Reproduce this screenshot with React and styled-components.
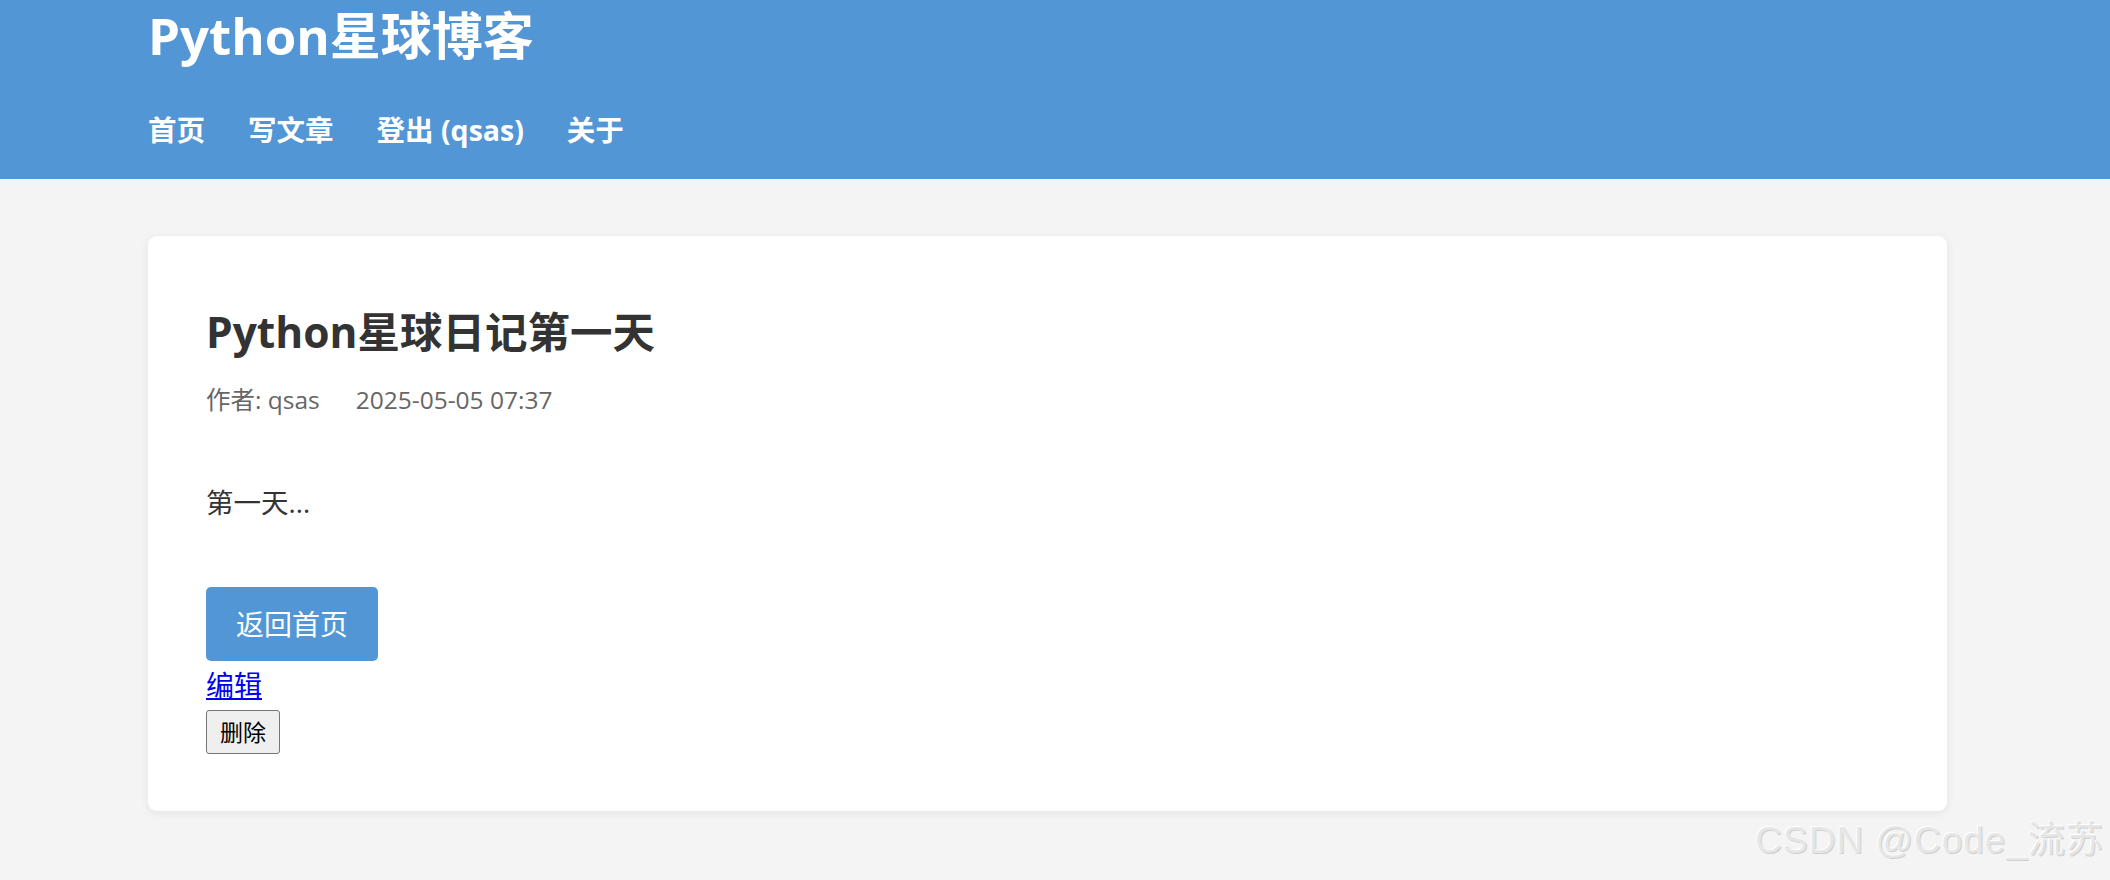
import React from "react";
import styled, { createGlobalStyle } from "styled-components";

const GlobalStyle = createGlobalStyle`
  html, body {
    margin: 0;
    padding: 0;
    min-height: 100%;
    background-color: #f4f4f4;
    font-family: "Open Sans", "Noto Sans CJK SC", sans-serif;
  }
`;

const Page = styled.div`
  position: relative;
  min-height: 880px;
  background-color: #f4f4f4;
`;

const Header = styled.header`
  background-color: #5396d5;
  color: white;
  padding: 5px 0 29px;
`;

const Container = styled.div`
  margin: 0 163px 0 148px;
`;

const SiteTitle = styled.h1`
  margin: 0;
  font-size: 51px;
  line-height: 60px;
  font-weight: 700;
`;

const Nav = styled.nav`
  display: flex;
  gap: 43px;
  margin-top: 45px;
`;

const NavLink = styled.a`
  color: white;
  text-decoration: none;
  font-size: 28.5px;
  line-height: 40px;
  font-weight: 700;
`;

const Main = styled.main`
  padding-top: 57px;
`;

const Card = styled.article`
  background: white;
  border-radius: 9px;
  box-shadow: 0 2px 10px rgba(0, 0, 0, 0.07);
  padding: 66px 58px 57px;
`;

const PostTitle = styled.h2`
  margin: 0;
  color: #333;
  font-size: 42.5px;
  line-height: 60px;
  font-weight: 700;
`;

const Meta = styled.div`
  display: flex;
  gap: 36px;
  margin-top: 21px;
  color: #666;
  font-size: 24.5px;
  line-height: 34px;
`;

const Body = styled.p`
  margin: 66px 0 0;
  color: #333;
  font-size: 27.5px;
  line-height: 40px;
`;

const BackButton = styled.a`
  display: inline-block;
  margin-top: 64px;
  height: 74px;
  padding: 0 30px;
  background-color: #5396d5;
  color: white;
  border-radius: 5px;
  font-size: 28px;
  line-height: 74px;
  text-decoration: none;
`;

const EditLink = styled.a`
  display: block;
  width: max-content;
  margin-top: 6px;
  color: #0000ee;
  text-decoration: underline;
  font-size: 28px;
  line-height: 36px;
`;

const DeleteButton = styled.button`
  display: block;
  margin-top: 7px;
  height: 44px;
  padding: 0 13px;
  background-color: #efefef;
  border: 1px solid #767676;
  border-radius: 3px;
  color: black;
  font-family: "Open Sans", "Noto Sans CJK SC", sans-serif;
  font-size: 23px;
  line-height: 40px;
`;

const Watermark = styled.div`
  position: absolute;
  right: 6px;
  bottom: 19px;
  font-family: "Liberation Sans", "Noto Sans CJK SC", sans-serif;
  font-size: 37px;
  line-height: 40px;
  letter-spacing: 1px;
  color: #e6e6e6;
  text-shadow: -1px -1px 0 #ffffff, 1px 1px 0 #cfcfcf;
  pointer-events: none;
`;

const App = () => {
  return (
    <Page>
      <GlobalStyle />
      <Header>
        <Container>
          <SiteTitle>Python星球博客</SiteTitle>
          <Nav>
            <NavLink href="#">首页</NavLink>
            <NavLink href="#">写文章</NavLink>
            <NavLink href="#">登出 (qsas)</NavLink>
            <NavLink href="#">关于</NavLink>
          </Nav>
        </Container>
      </Header>
      <Main>
        <Container>
          <Card>
            <PostTitle>Python星球日记第一天</PostTitle>
            <Meta>
              <span>作者: qsas</span>
              <span>2025-05-05 07:37</span>
            </Meta>
            <Body>第一天...</Body>
            <BackButton href="#">返回首页</BackButton>
            <EditLink href="#">编辑</EditLink>
            <DeleteButton>删除</DeleteButton>
          </Card>
        </Container>
      </Main>
      <Watermark>CSDN @Code_流苏</Watermark>
    </Page>
  );
};

export default App;
